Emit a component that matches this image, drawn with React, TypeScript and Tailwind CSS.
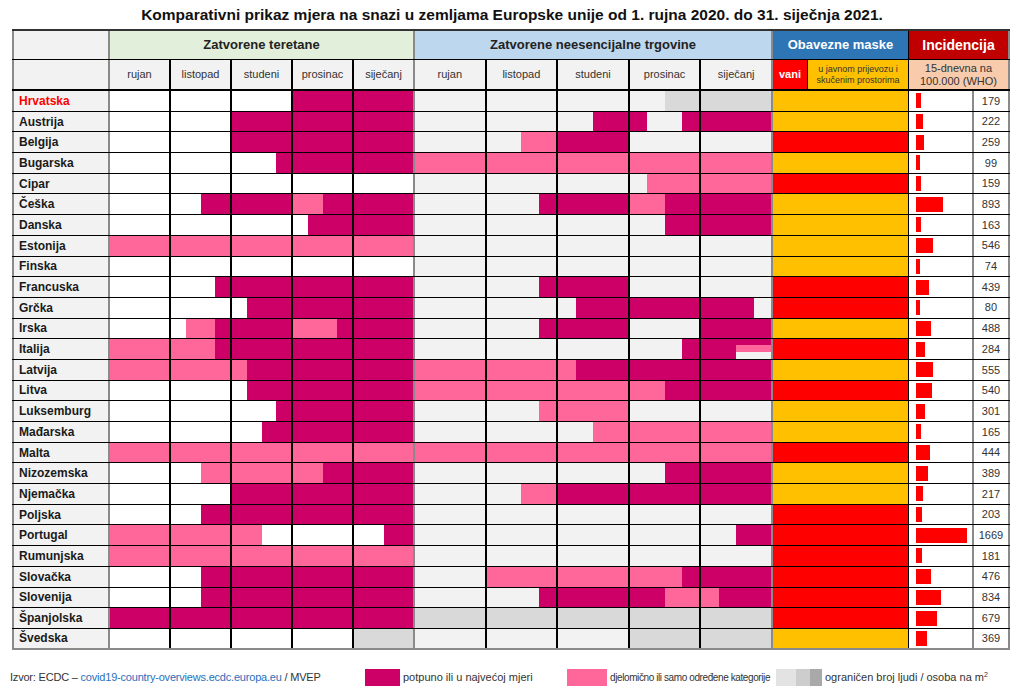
import React from 'react';

const COL: Record<string, string> = {
  w: 'bg-white',
  m: 'bg-[#cc0066]',
  p: 'bg-[#ff6699]',
  l: 'bg-[#f2f2f2]',
  d: 'bg-[#d9d9d9]',
};

type Seg = { c: string; s: number; e: number };

function parse(t: string): Seg[] {
  let pos = 0;
  return t.split(' ').map((tok) => {
    const len = parseFloat(tok.slice(1));
    const seg = { c: tok[0], s: pos, e: pos + len };
    pos += len;
    return seg;
  });
}

type Row = { n: string; g: string; s: string; mk: 'o' | 'r'; v: number };

const rows: Row[] = [
  { n: 'Hrvatska', g: 'w3 m2', s: 'l3.5 d1.5', mk: 'o', v: 179 },
  { n: 'Austrija', g: 'w2 m3', s: 'l2.5 m0.75 l0.5 m1.25', mk: 'o', v: 222 },
  { n: 'Belgija', g: 'w2 m3', s: 'l1.5 p0.5 m1 l2', mk: 'r', v: 259 },
  { n: 'Bugarska', g: 'w2.75 m2.25', s: 'p5', mk: 'o', v: 99 },
  { n: 'Cipar', g: 'w5', s: 'l3.25 p1.75', mk: 'r', v: 159 },
  { n: 'Češka', g: 'w1.5 m1.5 p0.5 m1.5', s: 'l1.75 m1.25 p0.5 m1.5', mk: 'o', v: 893 },
  { n: 'Danska', g: 'w3.25 m1.75', s: 'l3.5 m1.5', mk: 'o', v: 163 },
  { n: 'Estonija', g: 'p5', s: 'l5', mk: 'o', v: 546 },
  { n: 'Finska', g: 'w5', s: 'l5', mk: 'o', v: 74 },
  { n: 'Francuska', g: 'w1.75 m3.25', s: 'l1.75 m1.25 l2', mk: 'r', v: 439 },
  { n: 'Grčka', g: 'w2.25 m2.75', s: 'l2.25 m2.5 l0.25', mk: 'r', v: 80 },
  { n: 'Irska', g: 'w1.25 p0.5 m1.25 p0.75 m1.25', s: 'l1.75 m1.25 l1 m1', mk: 'o', v: 488 },
  { n: 'Italija', g: 'p1.75 m3.25', s: 'l3.75 m0.75 x0.5', mk: 'r', v: 284 },
  { n: 'Latvija', g: 'p2.25 m2.75', s: 'p2.25 m2.75', mk: 'o', v: 555 },
  { n: 'Litva', g: 'w2.25 m2.75', s: 'p3.5 m1.5', mk: 'r', v: 540 },
  { n: 'Luksemburg', g: 'w2.75 m2.25', s: 'l1.75 p1.25 l2', mk: 'o', v: 301 },
  { n: 'Mađarska', g: 'w2.5 m2.5', s: 'l2.5 p2.5', mk: 'o', v: 165 },
  { n: 'Malta', g: 'p5', s: 'p5', mk: 'r', v: 444 },
  { n: 'Nizozemska', g: 'w1.5 p2 m1.5', s: 'l3.5 m1.5', mk: 'o', v: 389 },
  { n: 'Njemačka', g: 'w2 m3', s: 'l1.5 p0.5 m3', mk: 'o', v: 217 },
  { n: 'Poljska', g: 'w1.5 m3.5', s: 'l5', mk: 'r', v: 203 },
  { n: 'Portugal', g: 'p2.5 w2 m0.5', s: 'l4.5 m0.5', mk: 'r', v: 1669 },
  { n: 'Rumunjska', g: 'p5', s: 'l5', mk: 'r', v: 181 },
  { n: 'Slovačka', g: 'w1.5 m3.5', s: 'l1 p2.75 m1.25', mk: 'r', v: 476 },
  { n: 'Slovenija', g: 'w1.5 m3.5', s: 'l1.75 m1.75 p0.75 m0.75', mk: 'r', v: 834 },
  { n: 'Španjolska', g: 'm5', s: 'd5', mk: 'r', v: 679 },
  { n: 'Švedska', g: 'w4 d1', s: 'l3 d2', mk: 'o', v: 369 },
];

const months = ['rujan', 'listopad', 'studeni', 'prosinac', 'siječanj'];

function MonthCell({ segs, i, wide }: { segs: Seg[]; i: number; wide: boolean }) {
  const parts = segs
    .map((sg) => ({ c: sg.c, f: Math.max(0, Math.min(sg.e, i + 1) - Math.max(sg.s, i)) }))
    .filter((p) => p.f > 0.001);
  const last = i === 4;
  return (
    <div
      className={`${wide ? 'w-[71.6px]' : 'w-[61px]'} h-full flex shrink-0 border-r-2 ${
        last ? 'border-[#8a8a8a]' : 'border-black'
      }`}
    >
      {parts.map((p, k) =>
        p.c === 'x' ? (
          <div key={k} className="h-full flex flex-col" style={{ width: `${p.f * 100}%` }}>
            <div className="h-[27%] bg-[#cc0066]" />
            <div className="h-[37%] bg-[#ff6699]" />
            <div className="flex-1 bg-[#f2f2f2]" />
          </div>
        ) : (
          <div key={k} className={`h-full ${COL[p.c]}`} style={{ width: `${p.f * 100}%` }} />
        )
      )}
    </div>
  );
}

function BodyRow({ r, last }: { r: Row; last: boolean }) {
  const g = parse(r.g);
  const s = parse(r.s);
  return (
    <div className={`flex h-[20.7px] ${last ? 'border-b-2 border-[#8a8a8a]' : 'border-b border-black'}`}>
      <div
        className={`w-[98px] shrink-0 h-full flex items-center pl-[5px] bg-[#f2f2f2] border-l-2 border-r-2 border-[#8a8a8a] text-[12px] font-bold ${
          r.n === 'Hrvatska' ? 'text-[#ff0000]' : 'text-[#1a1a1a]'
        }`}
      >
        {r.n}
      </div>
      {[0, 1, 2, 3, 4].map((i) => (
        <MonthCell key={'g' + i} segs={g} i={i} wide={false} />
      ))}
      {[0, 1, 2, 3, 4].map((i) => (
        <MonthCell key={'s' + i} segs={s} i={i} wide={true} />
      ))}
      <div
        className={`w-[136px] shrink-0 h-full border-r border-black ${
          r.mk === 'r' ? 'bg-[#ff0000]' : 'bg-[#ffc000]'
        }`}
      />
      <div className="w-[65px] shrink-0 h-full flex items-center pl-[7px] bg-white border-r-2 border-[#8a8a8a]">
        <div className="h-[15px] bg-[#ff0000]" style={{ width: Math.max(4, Math.round(r.v * 0.0305)) }} />
      </div>
      <div className="w-[36px] shrink-0 h-full flex items-center justify-center bg-white text-[11px] text-[#333] border-r-2 border-[#8a8a8a]">
        {r.v}
      </div>
    </div>
  );
}

export default function App() {
  return (
    <div className="w-[1024px] h-[697px] bg-white overflow-hidden font-['Liberation_Sans',Arial,sans-serif]">
      <div className="h-[29px] flex items-center justify-center text-[15.5px] font-bold text-[#111] whitespace-nowrap">
        Komparativni prikaz mjera na snazi u zemljama Europske unije od 1. rujna 2020. do 31. siječnja 2021.
      </div>
      <div className="ml-[12px] w-[998px]">
        {/* header row 1 */}
        <div className="flex h-[31px] border-t-2 border-[#333] border-b border-b-black">
          <div className="w-[98px] shrink-0 h-full bg-[#f2f2f2] border-l-2 border-r-2 border-[#8a8a8a]" />
          <div className="w-[305px] shrink-0 h-full bg-[#e2efda] border-r-2 border-[#8a8a8a] flex items-center justify-center text-[13px] font-bold text-[#222]">
            Zatvorene teretane
          </div>
          <div className="w-[358px] shrink-0 h-full bg-[#bdd7ee] border-r-2 border-[#8a8a8a] flex items-center justify-center text-[13px] font-bold text-[#222]">
            Zatvorene neesencijalne trgovine
          </div>
          <div className="w-[136px] shrink-0 h-full bg-[#2e75b6] border-r border-black flex items-center justify-center text-[13px] font-bold text-white">
            Obavezne maske
          </div>
          <div className="w-[101px] shrink-0 h-full bg-[#c00000] border-r-2 border-[#8a8a8a] flex items-center justify-center text-[14px] font-bold text-white">
            Incidencija
          </div>
        </div>
        {/* header row 2 */}
        <div className="flex h-[31px] border-b-2 border-black">
          <div className="w-[98px] shrink-0 h-full bg-[#f2f2f2] border-l-2 border-r-2 border-[#8a8a8a]" />
          {months.map((m, i) => (
            <div
              key={'gm' + m}
              className={`w-[61px] shrink-0 h-full bg-[#f2f2f2] border-r-2 flex items-center justify-center text-[11px] text-[#333] ${
                i === 4 ? 'border-[#8a8a8a]' : 'border-black'
              }`}
            >
              {m}
            </div>
          ))}
          {months.map((m, i) => (
            <div
              key={'sm' + m}
              className={`w-[71.6px] shrink-0 h-full bg-[#f2f2f2] border-r-2 flex items-center justify-center text-[11px] text-[#333] ${
                i === 4 ? 'border-[#8a8a8a]' : 'border-black'
              }`}
            >
              {m}
            </div>
          ))}
          <div className="w-[35px] shrink-0 h-full bg-[#ff0000] border-r border-black flex items-center justify-center text-[11px] font-bold text-white">
            vani
          </div>
          <div className="w-[101px] shrink-0 h-full bg-[#ffc000] border-r border-black flex flex-col items-center justify-center text-[9px] leading-[11px] text-[#333] text-center">
            <span>u javnom prijevozu i</span>
            <span>skučenim prostorima</span>
          </div>
          <div className="w-[101px] shrink-0 h-full bg-[#f8cbad] border-r-2 border-[#8a8a8a] flex flex-col items-center justify-center text-[11px] leading-[13px] text-[#333] text-center">
            <span>15-dnevna na</span>
            <span>100.000 (WHO)</span>
          </div>
        </div>
        {rows.map((r, idx) => (
          <BodyRow key={r.n} r={r} last={idx === rows.length - 1} />
        ))}
      </div>
      {/* legend */}
      <div className="mt-[19px] flex items-center h-[17px] pl-[10px] text-[11px] text-[#333] whitespace-nowrap">
        <div className="w-[355px] shrink-0 tracking-[-0.2px]">
          Izvor: ECDC – <span className="text-[#2a6ebb]">covid19-country-overviews.ecdc.europa.eu</span> / MVEP
        </div>
        <div className="w-[202px] shrink-0 flex items-center">
          <div className="w-[35px] h-[17px] bg-[#cc0066]" />
          <span className="ml-[3px]">potpuno ili u najvećoj mjeri</span>
        </div>
        <div className="w-[209px] shrink-0 flex items-center">
          <div className="w-[40px] h-[17px] shrink-0 bg-[#ff6699]" />
          <span className="ml-[3px] text-[10px] tracking-[-0.4px]">djelomično ili samo određene kategorije</span>
        </div>
        <div className="flex items-center">
          <div className="flex h-[17px]">
            <div className="w-[20px] bg-[#e3e3e3]" />
            <div className="w-[14px] bg-[#cdcdcd]" />
            <div className="w-[12px] bg-[#a9a9a9]" />
          </div>
          <span className="ml-[3px]">
            ograničen broj ljudi / osoba na m<sup className="text-[7px]">2</sup>
          </span>
        </div>
      </div>
    </div>
  );
}
